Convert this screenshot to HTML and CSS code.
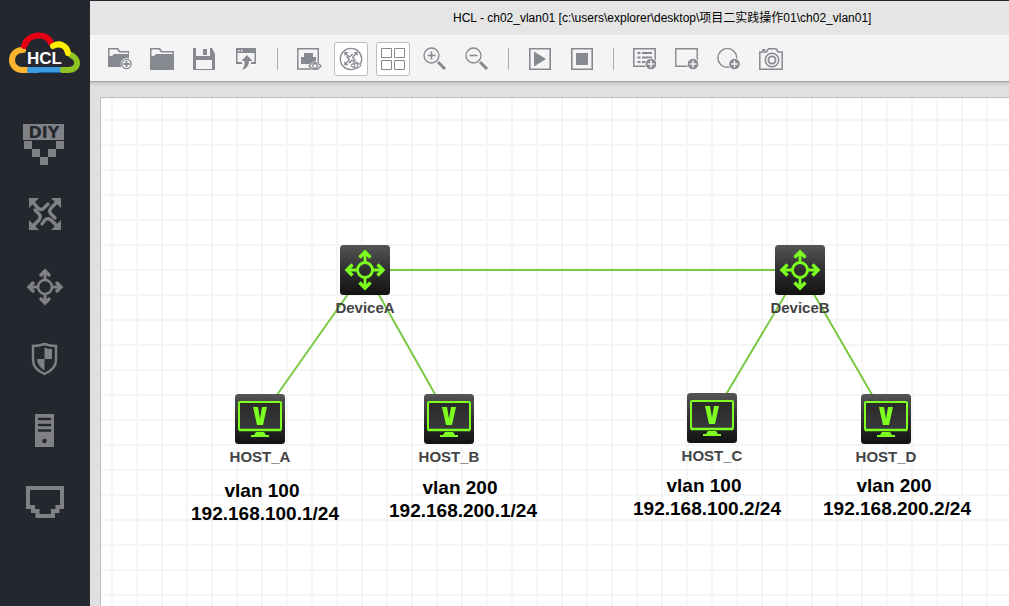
FILE: index.html
```html
<!DOCTYPE html>
<html lang="zh-CN">
<head>
<meta charset="utf-8">
<title>HCL - ch02_vlan01</title>
<link rel="stylesheet" href="styles.css">
</head>
<body>
<svg class="defs" aria-hidden="true">
  <defs>
    <linearGradient id="tile" x1="0" y1="0" x2="0" y2="1">
      <stop offset="0" stop-color="#555"/>
      <stop offset="0.5" stop-color="#303032"/>
      <stop offset="1" stop-color="#121212"/>
    </linearGradient>
    <linearGradient id="screen" x1="0" y1="0" x2="0" y2="1">
      <stop offset="0" stop-color="#2a2a2a"/>
      <stop offset="1" stop-color="#3a3a3e"/>
    </linearGradient>
  </defs>
  <symbol id="plus" viewBox="0 0 12 12">
    <circle cx="6" cy="6" r="6" fill="#f4f4f4"/>
    <circle cx="6" cy="6" r="5.300" fill="#868990"/>
    <path d="M6 2.500v7M2.500 6h7" stroke="#f4f4f4" stroke-width="1.6"/>
  </symbol>
  <symbol id="plus-ring" viewBox="0 0 12 12">
    <circle cx="6" cy="6" r="6" fill="#f4f4f4"/>
    <circle cx="6" cy="6" r="4.600" fill="none" stroke="#868990" stroke-width="1.400"/>
    <path d="M6 3v6M3 6h6" stroke="#868990" stroke-width="1.8"/>
  </symbol>
  <symbol id="eye" viewBox="0 0 14 10">
    <path d="M0 5Q7-4 14 5Q7 14 0 5Z" fill="#f4f4f4"/>
    <path d="M1 5Q7-2 13 5Q7 12 1 5Z" fill="none" stroke="#868990" stroke-width="1.2"/>
    <circle cx="7" cy="5" r="2.3" fill="none" stroke="#868990" stroke-width="1.2"/>
  </symbol>
  <symbol id="cross" viewBox="0 0 48 48">
    <path fill="currentColor" d="M8 7h10l-3 3-4 4-3 3ZM40 7v10l-3-3-4-4-3-3ZM40 39H30l3-3 4-4 3-3ZM8 39V29l3 3 4 4 3 3Z"/>
    <path fill="none" stroke="currentColor" stroke-width="3.4" stroke-linecap="round" d="M11 10l6 7q3 3 6 0l4-4M37 10l-6 6q-4 4-1 7l4 4M37 36l-6-6q-4-4-7-1l-3 4M11 36l6-6q4-4 1-7l-4-4"/>
  </symbol>
  <symbol id="router" viewBox="0 0 50 50">
    <rect width="50" height="50" rx="3.5" fill="url(#tile)"/>
    <g fill="none" stroke="#7dff1f">
      <circle cx="25" cy="25" r="7.5" stroke-width="2.8"/>
      <path stroke-width="2.8" d="M25 18V7M25 32v11M18 25H7M32 25h11"/>
      <path stroke-width="3.400" d="M19.500 12.500L25 7l5.500 5.500M19.500 37.500l5.500 5.500 5.500-5.500M12.500 19.500L7 25l5.500 5.500M37.500 19.500l5.500 5.500-5.500 5.500"/>
    </g>
  </symbol>
  <symbol id="host" viewBox="0 0 50 50">
    <rect width="50" height="50" rx="3.500" fill="url(#tile)"/>
    <rect x="4" y="8" width="42" height="28" rx="1" fill="url(#screen)" stroke="#7dff1f" stroke-width="2"/>
    <path d="M4 36h42" stroke="#7dff1f" stroke-width="2.500"/>
    <path fill="#7dff1f" d="M18 13h5l2 12 2-12h5l-4 18h-6ZM21 38h8l2 3h3v2H16v-2h3Z"/>
  </symbol>
</svg>

<div class="app">
  <aside class="sidebar">
    <svg class="logo" viewBox="0 0 90 107" role="img" aria-label="HCL">
      <g fill="none" stroke-width="6" stroke-linecap="round">
        <path stroke="#8fc31f" d="M71 55C80 59 79 70 68 70H62"/>
        <path stroke="#fdb62f" d="M23 50H22A10 10 0 0 0 22 70H28"/>
        <path stroke="#e60012" d="M24 46C28 33 47 32 51 43"/>
        <path stroke="#fff100" d="M53 46C60 42 67 46 68 53"/>
      </g>
      <path fill="#3c9be0" d="M28 67H61q-2 3 0 6H28q-2-3 0-6Z"/>
      <path fill="#1a63ad" d="M39 72h22v1H39Z"/>
      <text class="logo-text" x="27" y="64">HCL</text>
    </svg>
    <nav class="tools">
      <button class="tool" type="button" aria-label="DIY">
        <svg viewBox="0 0 48 48">
          <path fill="currentColor" d="M2 5h41v16H2ZM3 22h8v8H3ZM11 30h8v8h-8ZM19 38h8v8h-8ZM27 30h8v8h-8ZM35 22h8v8h-8Z"/>
          <text class="diy" x="23" y="19">DIY</text>
        </svg>
      </button>
      <button class="tool" type="button" aria-label="Switch">
        <svg viewBox="0 0 48 48"><use href="#cross"/></svg>
      </button>
      <button class="tool" type="button" aria-label="Router">
        <svg viewBox="0 0 48 48" fill="none" stroke="currentColor">
          <circle cx="24" cy="24" r="7" stroke-width="2.600"/>
          <path stroke-width="3" d="M24 17V8M24 31v9M17 24H8M31 24h9"/>
          <path stroke-width="3.400" stroke-linecap="round" d="M20 12l4-4 4 4M20 36l4 4 4-4M12 20l-4 4 4 4M36 20l4 4-4 4"/>
        </svg>
      </button>
      <button class="tool" type="button" aria-label="Firewall">
        <svg viewBox="0 0 48 48">
          <path fill="none" stroke="currentColor" stroke-width="2.400" d="M23.500 9Q29 11 35 11V25Q35 34 23.500 39Q12 34 12 25V11Q18 11 23.500 9Z"/>
          <path fill="currentColor" d="M23.500 12.500Q27 14 31 14V24H23.500ZM16 24h7.500v11.500Q16 31 16 24Z"/>
        </svg>
      </button>
      <button class="tool" type="button" aria-label="Host">
        <svg viewBox="0 0 48 48">
          <path fill="currentColor" d="M14 7h19v33H14Z"/>
          <path stroke="#25272f" stroke-width="2.600" stroke-linecap="round" d="M18 12h11M18 18h11M18 23.500h11"/>
          <circle cx="23.500" cy="34" r="2.200" fill="#25272f"/>
        </svg>
      </button>
      <button class="tool" type="button" aria-label="Connection">
        <svg viewBox="0 0 48 48">
          <path fill="none" stroke="currentColor" stroke-width="4" d="M7 9H41V28H36.500V32H32V37H16.500V32H12V28H7Z"/>
        </svg>
      </button>
    </nav>
  </aside>

  <main class="main">
    <header class="titlebar">HCL - ch02_vlan01 [c:\users\explorer\desktop\项目二实践操作01\ch02_vlan01]</header>

    <div class="toolbar" role="toolbar" aria-label="Project">
      <button class="btn" type="button" aria-label="New project">
        <svg viewBox="0 0 24 24">
          <path fill="#868990" d="M0 1h10l2 3h9v16H0Z"/>
          <path fill="#f4f4f4" d="M1.500 2.500H9L11 5.500h9V7H6L4 9H1.500Z"/>
          <use href="#plus-ring" x="12.500" y="11" width="12" height="12"/>
        </svg>
      </button>
      <button class="btn" type="button" aria-label="Open project">
        <svg viewBox="0 0 24 24">
          <path fill="#868990" d="M0 1h10l2 3h12v19H0Z"/>
          <path fill="#f4f4f4" d="M1.500 2.500H9L11 5.500h11.500V7H6L4 9H1.500Z"/>
        </svg>
      </button>
      <button class="btn" type="button" aria-label="Save project">
        <svg viewBox="0 0 24 24">
          <path fill="#868990" d="M1 1H20L23 7V23H1Z"/>
          <path fill="#f4f4f4" d="M4 1h14v8H4ZM4 13h16v9H4Z"/>
          <path fill="#868990" d="M11 2h4v6h-4Z"/>
        </svg>
      </button>
      <button class="btn" type="button" aria-label="Export project">
        <svg viewBox="0 0 24 24">
          <path fill="#868990" d="M2 1h20v5H2ZM2 6h1.500v9H8v2H2ZM22 6h-1.500v9H17v2h5Z"/>
          <path fill="#868990" d="M13 8l5.500 6H15q0 7-7 9 3-4 2.500-9H7.500Z"/>
          <path fill="#f4f4f4" d="M4 3h1.500v1.500H4ZM7 3h1.500v1.500H7Z"/>
        </svg>
      </button>
      <span class="sep"></span>
      <button class="btn" type="button" aria-label="Show interfaces">
        <svg viewBox="0 0 24 24">
          <path fill="none" stroke="#868990" stroke-width="1.500" d="M.8 1.800H21.200V22H.8Z"/>
          <path fill="#868990" d="M4 10h3V6h9v4h3v7H4Z"/>
          <use href="#eye" x="11" y="14" width="14" height="10"/>
        </svg>
      </button>
      <button class="btn is-on" type="button" aria-pressed="true" aria-label="Show device names">
        <svg viewBox="0 0 24 24" class="ink">
          <circle cx="12" cy="12" r="10.700" fill="none" stroke="#868990" stroke-width="1.300"/>
          <use href="#cross" x="2" y="2" width="20" height="20"/>
          <use href="#eye" x="11" y="14" width="12" height="9"/>
        </svg>
      </button>
      <button class="btn is-on" type="button" aria-pressed="true" aria-label="Show grid">
        <svg viewBox="0 0 24 24">
          <path fill="none" stroke="#868990" d="M.5 1.500h10v9H.5ZM13.500 1.500h10v9h-10ZM.5 13.500h10v9H.5ZM13.500 13.500h10v9h-10Z"/>
        </svg>
      </button>
      <button class="btn" type="button" aria-label="Zoom in">
        <svg viewBox="0 0 24 24" fill="none" stroke="#868990">
          <circle cx="8.500" cy="8.500" r="7.500" stroke-width="1.300"/>
          <path stroke-width="1.600" d="M4.500 8.500h8M8.500 4.500v8"/>
          <path stroke-width="3" d="M15 15L22 22"/>
        </svg>
      </button>
      <button class="btn" type="button" aria-label="Zoom out">
        <svg viewBox="0 0 24 24" fill="none" stroke="#868990">
          <circle cx="8.500" cy="8.500" r="7.500" stroke-width="1.300"/>
          <path stroke-width="1.600" d="M4.500 8.500h8"/>
          <path stroke-width="3" d="M15 15L22 22"/>
        </svg>
      </button>
      <span class="sep"></span>
      <button class="btn" type="button" aria-label="Start all">
        <svg viewBox="0 0 24 24">
          <path fill="none" stroke="#868990" stroke-width="1.600" d="M1.800 1.800H22.200V22.200H1.800Z"/>
          <path fill="#868990" d="M6 4.500L18 12 6 19.500Z"/>
        </svg>
      </button>
      <button class="btn" type="button" aria-label="Stop all">
        <svg viewBox="0 0 24 24">
          <path fill="none" stroke="#868990" stroke-width="1.600" d="M1.800 1.800H22.200V22.200H1.800Z"/>
          <path fill="#868990" d="M6 6h12v12H6Z"/>
        </svg>
      </button>
      <span class="sep"></span>
      <button class="btn" type="button" aria-label="Add note">
        <svg viewBox="0 0 24 24">
          <path fill="none" stroke="#868990" stroke-width="1.500" d="M.8 1.800H22.200V19.200H.8Z"/>
          <path stroke="#868990" stroke-width="1.800" d="M4.500 6h3M9 6h10M4.500 10.500h3M9 10.500h10M4.500 15h3M9 15h5"/>
          <use href="#plus" x="12" y="11" width="12" height="12"/>
        </svg>
      </button>
      <button class="btn" type="button" aria-label="Add rectangle">
        <svg viewBox="0 0 24 24">
          <path fill="none" stroke="#868990" stroke-width="1.400" d="M.8 1.800H22.200V19.200H.8Z"/>
          <use href="#plus" x="12" y="11" width="12" height="12"/>
        </svg>
      </button>
      <button class="btn" type="button" aria-label="Add ellipse">
        <svg viewBox="0 0 24 24">
          <circle cx="10.300" cy="10.800" r="9.400" fill="none" stroke="#868990" stroke-width="1.400"/>
          <use href="#plus" x="11.500" y="11" width="12" height="12"/>
        </svg>
      </button>
      <button class="btn" type="button" aria-label="Screenshot">
        <svg viewBox="0 0 24 24" fill="none" stroke="#868990">
          <path stroke-width="1.500" d="M.8 5H7.500L9.500 1.700H17L19 5H23.200V22.200H.8Z"/>
          <path stroke-width="1.800" d="M3 3h3.500"/>
          <circle cx="13" cy="13" r="6.800" stroke-width="1.500"/>
          <circle cx="13" cy="13" r="3.600" stroke-width="1.800"/>
        </svg>
      </button>
    </div>

    <div class="workspace">
      <section class="canvas" aria-label="Topology">
        <svg class="links">
          <path d="M264 172H699M264 172L159 321M264 172L348 321M699 172L611 320M699 172L785 321"/>
        </svg>
        <figure class="node device-a"><svg><use href="#router"/></svg><figcaption>DeviceA</figcaption></figure>
        <figure class="node device-b"><svg><use href="#router"/></svg><figcaption>DeviceB</figcaption></figure>
        <figure class="node host-a"><svg><use href="#host"/></svg><figcaption>HOST_A</figcaption></figure>
        <figure class="node host-b"><svg><use href="#host"/></svg><figcaption>HOST_B</figcaption></figure>
        <figure class="node host-c"><svg><use href="#host"/></svg><figcaption>HOST_C</figcaption></figure>
        <figure class="node host-d"><svg><use href="#host"/></svg><figcaption>HOST_D</figcaption></figure>
        <div class="note note-a"><span class="vlan">vlan 100</span><span>192.168.100.1/24</span></div>
        <div class="note note-b"><span class="vlan">vlan 200</span><span>192.168.200.1/24</span></div>
        <div class="note note-c"><span class="vlan">vlan 100</span><span>192.168.100.2/24</span></div>
        <div class="note note-d"><span class="vlan">vlan 200</span><span>192.168.200.2/24</span></div>
      </section>
    </div>
  </main>
</div>
</body>
</html>
```

FILE: styles.css
```css
* { box-sizing: border-box; }

body {
  margin: 0;
  font-family: "Liberation Sans", "Noto Sans CJK SC", sans-serif;
  overflow: hidden;
}

.defs { position: absolute; width: 0; height: 0; }

.app { display: flex; min-height: 100vh; }

/* Sidebar */
.sidebar { flex: 0 0 90px; background: #25272f; }
.logo { display: block; width: 90px; height: 107px; }
.logo-text { font-size: 17px; font-weight: bold; fill: #fff; }
.tools { display: flex; flex-direction: column; }
.tool {
  display: flex;
  align-items: center;
  justify-content: center;
  height: 72px;
  padding: 0;
  border: 0;
  background: none;
  color: #808186;
}
.tool svg { width: 48px; height: 48px; }
.diy {
  font-family: "DejaVu Sans", sans-serif;
  font-size: 16px;
  font-weight: bold;
  text-anchor: middle;
  fill: #25272f;
}

/* Main column */
.main { flex: 1; min-width: 0; display: flex; flex-direction: column; overflow: hidden; }

.titlebar {
  height: 35px;
  padding-left: 363px;
  border-top: 1px solid #25272f;
  background: #e5e5e5;
  font-size: 12px;
  line-height: 34px;
  color: #000;
  white-space: nowrap;
}

.toolbar {
  display: flex;
  gap: 8px;
  padding: 7px 13px 5px;
  border-bottom: 1px solid #a3a3a3;
  background: #f4f4f4;
}
.btn {
  display: flex;
  align-items: center;
  justify-content: center;
  flex: none;
  width: 34px;
  height: 34px;
  padding: 0;
  border: 1px solid transparent;
  border-radius: 3px;
  background: none;
}
.btn svg { width: 24px; height: 24px; flex: none; overflow: visible; }
.btn.is-on { background: #fff; border-color: #bdbdbd; }
.ink { color: #868990; }
.sep { flex: none; width: 13px; height: 22px; margin: 6px 0; display: flex; justify-content: center; }
.sep::before { content: ""; width: 1px; background: #aaa; }

.workspace {
  flex: 1;
  display: flex;
  padding: 15px 0 0 10px;
  background: linear-gradient(#c4c4c4, #e0e0e0 4px);
}

/* Topology canvas */
.canvas {
  position: relative;
  flex: 1;
  overflow: hidden;
  border: solid #bdbdbd;
  border-width: 1px 0 0 1px;
  background-color: #fff;
  background-image:
    linear-gradient(to right, #f5f5f5 2px, transparent 2px),
    linear-gradient(to bottom, #f5f5f5 2px, transparent 2px);
  background-size: 25px 25px;
  background-position: 10px 21px;
}
.links { position: absolute; left: 0; top: 0; width: 100%; height: 100%; }
.links path { fill: none; stroke: #7ac943; stroke-width: 2; }

.node {
  position: absolute;
  display: flex;
  flex-direction: column;
  align-items: center;
  width: 50px;
  margin: 0;
}
.node svg { width: 50px; height: 50px; }
.node figcaption {
  font-size: 15px;
  font-weight: bold;
  line-height: 26px;
  color: #444;
}
.device-a { left: 239px; top: 147px; }
.device-b { left: 674px; top: 147px; }
.host-a { left: 134px; top: 296px; }
.host-b { left: 323px; top: 296px; }
.host-c { left: 586px; top: 295px; }
.host-d { left: 760px; top: 296px; }

.note {
  position: absolute;
  display: flex;
  flex-direction: column;
  align-items: center;
  width: 160px;
  font-size: 19px;
  font-weight: bold;
  line-height: 23px;
  color: #000;
}
.vlan { padding-right: 6px; }
.note-a { left: 84px; top: 381px; }
.note-b { left: 282px; top: 378px; }
.note-c { left: 526px; top: 376px; }
.note-d { left: 716px; top: 376px; }
```
